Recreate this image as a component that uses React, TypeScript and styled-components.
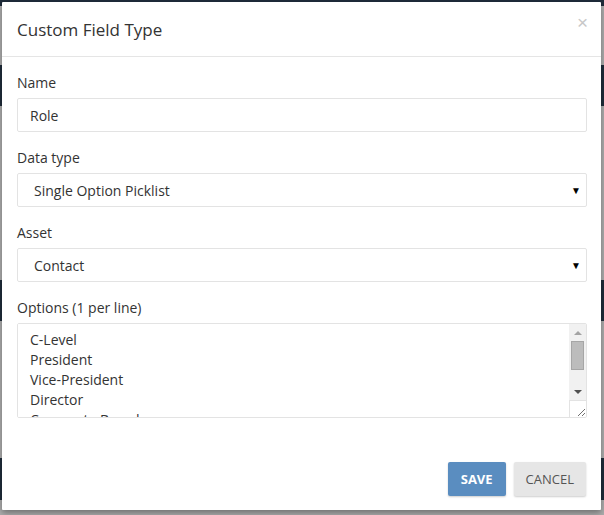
import styled, { createGlobalStyle } from "styled-components";

const GlobalStyle = createGlobalStyle`
    * {
        box-sizing: border-box;
    }

    body {
        margin: 0;
        font-family: "Open Sans", "Liberation Sans", sans-serif;
        font-size: 14px;
        color: #333;
    }
`;

const StyledBackdrop = styled.div`
    width: 604px;
    height: 515px;
    padding: 2px 3px 0 2px;
    background: linear-gradient(
        to bottom,
        #1f2c3a 0px,
        #1f2c3a 6px,
        #adadad 6px,
        #adadad 65px,
        #1f2c3a 65px,
        #1f2c3a 106px,
        #adadad 106px,
        #adadad 280px,
        #1f2c3a 280px,
        #1f2c3a 321px,
        #adadad 321px,
        #adadad 458px,
        #1f2c3a 458px,
        #1f2c3a 500px,
        #adadad 500px
    );
`;

const StyledModal = styled.div`
    width: 599px;
    height: 508px;
    background-color: #fff;
    border-radius: 1px;
    box-shadow: 0 3px 6px rgba(0, 0, 0, 0.35);
    display: flex;
    flex-direction: column;
`;

const StyledHeader = styled.div`
    height: 55px;
    padding: 0 15px;
    border-bottom: 1px solid #e5e5e5;
    display: flex;
    align-items: center;
    justify-content: space-between;
`;

const StyledTitle = styled.h4`
    margin: 0;
    font-size: 17px;
    font-weight: 400;
    color: #333;
`;

const StyledClose = styled.button`
    border: none;
    background: none;
    padding: 0;
    margin-top: -14px;
    margin-right: -2px;
    font-family: "Liberation Sans", sans-serif;
    font-size: 19px;
    line-height: 1;
    color: #c8c8c8;
    cursor: pointer;
`;

const StyledBody = styled.div`
    padding: 16px 15px 0 15px;
    flex-grow: 1;
`;

const StyledGroup = styled.div`
    margin-bottom: 16px;
`;

const StyledLabel = styled.label`
    display: block;
    margin-bottom: 5px;
    line-height: 20px;
    font-weight: 400;
`;

const controlStyles = `
    display: block;
    width: 570px;
    border: 1px solid #e3e3e3;
    border-radius: 2px;
    background-color: #fff;
    font-family: "Open Sans", "Liberation Sans", sans-serif;
    font-size: 14px;
    color: #333;
    outline: none;
`;

const StyledInput = styled.input`
    ${controlStyles}
    height: 34px;
    padding: 6px 12px;
`;

const StyledSelectWrap = styled.div`
    position: relative;
    width: 570px;
`;

const StyledSelect = styled.select`
    ${controlStyles}
    height: 34px;
    padding: 6px 16px;
    appearance: none;
`;

const StyledArrow = styled.span`
    position: absolute;
    right: 6px;
    top: 10px;
    font-size: 10px;
    color: #000;
    pointer-events: none;
`;

const StyledTextareaBox = styled.div`
    width: 570px;
    height: 95px;
    border: 1px solid #e3e3e3;
    border-radius: 2px;
    display: flex;
    overflow: hidden;
`;

const StyledTextarea = styled.textarea`
    flex-grow: 1;
    height: 100%;
    border: none;
    padding: 6px 12px 0 12px;
    line-height: 20px;
    font-family: "Open Sans", "Liberation Sans", sans-serif;
    font-size: 14px;
    color: #333;
    resize: none;
    outline: none;
    overflow: hidden;
`;

const StyledScrollbar = styled.div`
    width: 17px;
    display: flex;
    flex-direction: column;
    background-color: #f1f1f1;
`;

const StyledScrollButton = styled.div<{ $up?: boolean }>`
    height: 17px;
    display: flex;
    align-items: center;
    justify-content: center;

    &::before {
        content: "";
        border-left: 4px solid transparent;
        border-right: 4px solid transparent;
        ${props => props.$up
            ? 'border-bottom: 4px solid #a3a3a3;'
            : 'border-top: 4px solid #505050;'}
    }
`;

const StyledTrack = styled.div`
    flex-grow: 1;
    padding: 0 2px;
`;

const StyledThumb = styled.div`
    height: 29px;
    background-color: #bcbcbc;
    border: 1px solid #a6a6a6;
`;

const StyledResizer = styled.div`
    height: 17px;
    background-color: #fff;
    border-top: 1px solid #e3e3e3;
    border-left: 1px solid #e3e3e3;
    display: flex;
    align-items: flex-end;
    justify-content: flex-end;
`;

const StyledFooter = styled.div`
    padding: 0 15px 14px 15px;
    display: flex;
    justify-content: flex-end;
    gap: 8px;
`;

const StyledButton = styled.button<{ $primary?: boolean }>`
    height: 34px;
    padding: 0 ${props => props.$primary ? 13 : 12}px;
    border: none;
    border-radius: 2px;
    font-family: "Open Sans", "Liberation Sans", sans-serif;
    font-size: 13px;
    font-weight: ${props => props.$primary ? 700 : 400};
    color: ${props => props.$primary ? '#fff' : '#555'};
    background-color: ${props => props.$primary ? '#5a8dc0' : '#e6e6e6'};
    box-shadow: 0 1px 2px rgba(0, 0, 0, 0.2);
    cursor: pointer;
`;

const options = ["C-Level", "President", "Vice-President", "Director", "Corporate Board", "Manager", "Other"];

export default function App() {
    return (
        <StyledBackdrop>
            <GlobalStyle />
            <StyledModal>
                <StyledHeader>
                    <StyledTitle>Custom Field Type</StyledTitle>
                    <StyledClose>×</StyledClose>
                </StyledHeader>
                <StyledBody>
                    <StyledGroup>
                        <StyledLabel>Name</StyledLabel>
                        <StyledInput defaultValue="Role" />
                    </StyledGroup>
                    <StyledGroup>
                        <StyledLabel>Data type</StyledLabel>
                        <StyledSelectWrap>
                            <StyledSelect defaultValue="single">
                                <option value="single">Single Option Picklist</option>
                                <option value="multi">Multi Option Picklist</option>
                                <option value="text">Text</option>
                            </StyledSelect>
                            <StyledArrow>▼</StyledArrow>
                        </StyledSelectWrap>
                    </StyledGroup>
                    <StyledGroup>
                        <StyledLabel>Asset</StyledLabel>
                        <StyledSelectWrap>
                            <StyledSelect defaultValue="contact">
                                <option value="contact">Contact</option>
                                <option value="account">Account</option>
                            </StyledSelect>
                            <StyledArrow>▼</StyledArrow>
                        </StyledSelectWrap>
                    </StyledGroup>
                    <StyledGroup>
                        <StyledLabel>Options (1 per line)</StyledLabel>
                        <StyledTextareaBox>
                            <StyledTextarea defaultValue={options.join("\n")} />
                            <StyledScrollbar>
                                <StyledScrollButton $up />
                                <StyledTrack>
                                    <StyledThumb />
                                </StyledTrack>
                                <StyledScrollButton />
                                <StyledResizer>
                                    <svg width="10" height="10" viewBox="0 0 10 10">
                                        <path d="M9 2 L2 9 M9 6 L6 9" stroke="#707070" strokeWidth="1" />
                                    </svg>
                                </StyledResizer>
                            </StyledScrollbar>
                        </StyledTextareaBox>
                    </StyledGroup>
                </StyledBody>
                <StyledFooter>
                    <StyledButton $primary>SAVE</StyledButton>
                    <StyledButton>CANCEL</StyledButton>
                </StyledFooter>
            </StyledModal>
        </StyledBackdrop>
    );
}
